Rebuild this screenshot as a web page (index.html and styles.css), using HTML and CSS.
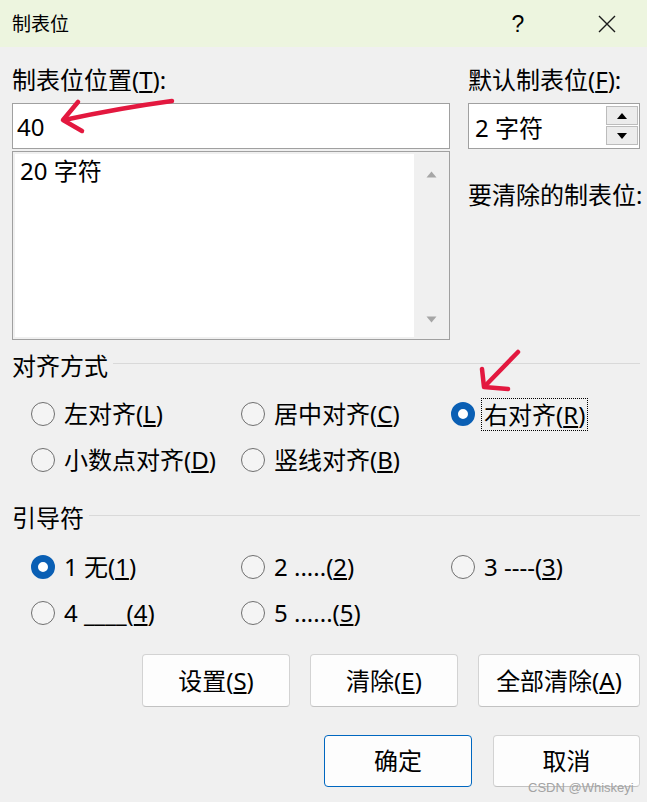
FILE: index.html
```html
<!DOCTYPE html>
<html lang="zh-CN">
<head>
<meta charset="utf-8">
<title>制表位</title>
<link rel="stylesheet" href="styles.css">
</head>
<body>
<div class="dialog">
  <div class="titlebar">
    <span class="title">制表位</span>
    <span class="help">?</span>
    <svg class="close" viewBox="0 0 18 18" width="18" height="18"><path d="M1 1L17 17M17 1L1 17" stroke="#1a1a1a" stroke-width="1.4" fill="none"/></svg>
  </div>
  <div class="content">
    <div class="top">
      <div class="col-left">
        <div class="label">制表位位置(<u>T</u>):</div>
        <div class="input">40</div>
        <div class="listbox">
          <div class="list-area"><div class="list-item">20 字符</div></div>
          <div class="vscroll">
            <svg width="11" height="7" viewBox="0 0 11 7"><path d="M5.5 0.5L10.5 6.5H0.5Z" fill="#a6a6a6"/></svg>
            <svg width="11" height="7" viewBox="0 0 11 7"><path d="M0.5 0.5H10.5L5.5 6.5Z" fill="#a6a6a6"/></svg>
          </div>
        </div>
      </div>
      <div class="col-right">
        <div class="label">默认制表位(<u>F</u>):</div>
        <div class="spinner">
          <span class="spin-value">2 字符</span>
          <div class="spin-buttons">
            <div class="spin-btn"><svg width="10" height="6" viewBox="0 0 10 6"><path d="M5 0L10 6H0Z" fill="#000"/></svg></div>
            <div class="spin-btn"><svg width="10" height="6" viewBox="0 0 10 6"><path d="M0 0H10L5 6Z" fill="#000"/></svg></div>
          </div>
        </div>
        <div class="label clear-label">要清除的制表位:</div>
      </div>
    </div>

    <div class="group align-group">
      <div class="group-head"><span>对齐方式</span><i class="rule"></i></div>
      <div class="radio-grid">
        <div class="radio"><span class="dot"></span><span>左对齐(<u>L</u>)</span></div>
        <div class="radio"><span class="dot"></span><span>居中对齐(<u>C</u>)</span></div>
        <div class="radio checked"><span class="dot"></span><span class="focus">右对齐(<u>R</u>)</span></div>
        <div class="radio"><span class="dot"></span><span>小数点对齐(<u>D</u>)</span></div>
        <div class="radio"><span class="dot"></span><span>竖线对齐(<u>B</u>)</span></div>
      </div>
    </div>

    <div class="group leader-group">
      <div class="group-head"><span>引导符</span><i class="rule"></i></div>
      <div class="radio-grid">
        <div class="radio checked"><span class="dot"></span><span>1 无(<u>1</u>)</span></div>
        <div class="radio"><span class="dot"></span><span>2 .....(<u>2</u>)</span></div>
        <div class="radio"><span class="dot"></span><span>3 ----(<u>3</u>)</span></div>
        <div class="radio"><span class="dot"></span><span>4 ____(<u>4</u>)</span></div>
        <div class="radio"><span class="dot"></span><span>5 ......(<u>5</u>)</span></div>
      </div>
    </div>

    <div class="btn-row action-row">
      <button class="btn w148">设置(<u>S</u>)</button>
      <button class="btn w148">清除(<u>E</u>)</button>
      <button class="btn w162">全部清除(<u>A</u>)</button>
    </div>
    <div class="btn-row ok-row">
      <button class="btn primary w148">确定</button>
      <button class="btn w147">取消</button>
    </div>
  </div>

  <div class="watermark">CSDN @Whiskeyi</div>

  <svg class="annot" width="647" height="802" viewBox="0 0 647 802">
    <g fill="none" stroke="#e3183f" stroke-width="4.5" stroke-linecap="round" stroke-linejoin="round">
      <path d="M172 101 Q120 108 64 120"/>
      <path d="M78 102 L63 120 L82 131"/>
      <path d="M518 352 L485 386"/>
      <path d="M482 369 L484 387 L508 389"/>
    </g>
  </svg>
</div>
</body>
</html>
```

FILE: styles.css
```css
* { box-sizing: border-box; }
html, body { margin: 0; padding: 0; }
body {
  width: 647px;
  height: 802px;
  overflow: hidden;
  background: #f0f0f0;
  font-family: "Noto Sans", "Noto Sans CJK SC", sans-serif;
  font-size: 24px;
  color: #000;
}
u {
  text-decoration-thickness: 1.5px;
  text-underline-offset: 2px;
}
.dialog {
  position: relative;
  width: 647px;
  height: 802px;
  background: #f0f0f0;
  border-bottom-left-radius: 9px;
}
.titlebar {
  height: 47px;
  background: #edf5df;
  display: flex;
  align-items: center;
  padding: 0 31px 0 12px;
}
.title {
  flex: 1;
  font-size: 19px;
  line-height: 24px;
}
.help {
  width: 20px;
  text-align: center;
  font-family: "Liberation Sans", sans-serif;
  font-size: 23px;
  line-height: 24px;
  margin-right: 70px;
}
.close { display: block; }

.content { padding: 21px 7px 0 12px; }

.top {
  display: grid;
  grid-template-columns: 438px 172px;
  column-gap: 18px;
}
.label {
  height: 24px;
  line-height: 24px;
  white-space: nowrap;
}
.input {
  margin-top: 11px;
  height: 46px;
  border: 1px solid #a0a0a0;
  background: #fff;
  padding-left: 4px;
  display: flex;
  align-items: center;
}
.listbox {
  margin-top: 2px;
  height: 189px;
  border: 1px solid #a0a0a0;
  padding: 2px 1px 2px 2px;
  background: #f0f0f0;
  display: flex;
}
.list-area {
  flex: 1;
  background: #fff;
  padding: 5px 0 0 5px;
  line-height: 24px;
}
.vscroll {
  width: 34px;
  display: flex;
  flex-direction: column;
  justify-content: space-between;
  align-items: center;
  padding: 17px 0 14px;
}
.vscroll svg { display: block; }

.spinner {
  margin-top: 11px;
  height: 46px;
  border: 1px solid #a0a0a0;
  background: #fff;
  display: flex;
}
.spin-value {
  flex: 1;
  padding-left: 6px;
  display: flex;
  align-items: center;
}
.spin-buttons {
  width: 32px;
  margin: 2px 1px 3px 0;
  display: flex;
  flex-direction: column;
  gap: 1px;
}
.spin-btn {
  flex: 1;
  background: #ececec;
  border: 1px solid #bcbcbc;
  display: flex;
  align-items: center;
  justify-content: center;
}
.spin-btn svg { display: block; }
.clear-label { margin-top: 34px; }

.group-head {
  display: flex;
  align-items: center;
  line-height: 24px;
  height: 24px;
}
.rule {
  flex: 1;
  height: 1px;
  background: #d9d9d9;
  margin-left: 5px;
  margin-bottom: 6px;
}
.align-group { margin-top: 14px; }
.leader-group { margin-top: 23px; }
.align-group .radio-grid { margin-top: 13px; }
.leader-group .radio-grid { margin-top: 14px; }

.radio-grid {
  display: grid;
  grid-template-columns: 210px 210px 1fr;
  grid-auto-rows: 46px;
  margin-left: 19px;
}
.radio {
  display: flex;
  align-items: center;
  gap: 9px;
  white-space: nowrap;
  line-height: 24px;
}
.dot {
  flex: none;
  width: 24px;
  height: 24px;
  border-radius: 50%;
  border: 1.5px solid #6f6f6f;
  background: #f4f4f4;
}
.radio.checked .dot {
  border: 7px solid #0a5fb4;
  background: #fff;
}
.focus {
  margin-left: -3px;
  padding: 0 2px;
  line-height: 31px;
  border: 1px dotted #000;
}

.btn-row {
  display: flex;
  justify-content: flex-end;
}
.action-row {
  margin-top: 18px;
  gap: 20px;
}
.ok-row {
  margin-top: 28px;
  gap: 21px;
}
.btn {
  font: inherit;
  color: #000;
  background: #fdfdfd;
  border: 1px solid #d3d3d3;
  border-bottom-color: #c2c2c2;
  border-radius: 4px;
  padding: 0;
  height: 53px;
  line-height: 24px;
}
.ok-row .btn { height: 52px; }
.btn.primary { border: 1.5px solid #0067c0; }
.w148 { width: 148px; }
.w147 { width: 147px; }
.w162 { width: 162px; }

.watermark {
  position: absolute;
  left: 528px;
  top: 780px;
  font-family: "Liberation Sans", sans-serif;
  font-size: 13px;
  line-height: 16px;
  color: #a3a3a3;
}
.annot {
  position: absolute;
  left: 0;
  top: 0;
  pointer-events: none;
}
```
